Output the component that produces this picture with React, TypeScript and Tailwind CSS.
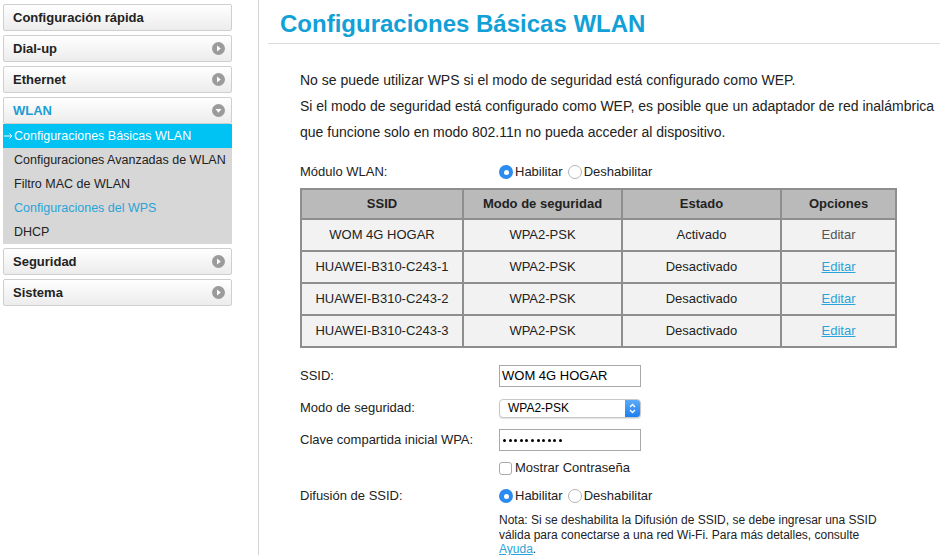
import React from 'react';

const font = { fontFamily: '"Liberation Sans", Arial, sans-serif' };

const Arrow: React.FC<{ down?: boolean }> = ({ down }) => (
  <svg width="13" height="13" viewBox="0 0 13 13" className="shrink-0">
    <circle cx="6.5" cy="6.5" r="6.5" fill="#9b9b9b" />
    {down ? <path d="M3.5 5 L9.5 5 L6.5 8.8 Z" fill="#fff" /> : <path d="M5 3.5 L8.8 6.5 L5 9.5 Z" fill="#fff" />}
  </svg>
);

const MenuItem: React.FC<{ label: string; arrow?: boolean; down?: boolean; active?: boolean }> = ({ label, arrow = true, down, active }) => (
  <div className="h-[27px] flex items-center justify-between pl-[9px] pr-[6px] border border-[#cfcfcf] rounded-[2px] bg-gradient-to-b from-white to-[#ececec]">
    <span className={`text-[13px] font-bold ${active ? 'text-[#1c9ed4]' : 'text-[#222]'}`}>{label}</span>
    {arrow && <Arrow down={down} />}
  </div>
);

const Radio: React.FC<{ checked?: boolean; label: string }> = ({ checked, label }) => (
  <label className="flex items-center gap-[2px] text-[13px] text-[#222]">
    {checked ? (
      <span className="w-[14px] h-[14px] rounded-full bg-[#2b8cf0] flex items-center justify-center">
        <span className="w-[5px] h-[5px] rounded-full bg-white" />
      </span>
    ) : (
      <span className="w-[14px] h-[14px] rounded-full border border-[#b5b5b5] bg-white" />
    )}
    <span>{label}</span>
  </label>
);

const rows = [
  { ssid: 'WOM 4G HOGAR', modo: 'WPA2-PSK', estado: 'Activado', link: false },
  { ssid: 'HUAWEI-B310-C243-1', modo: 'WPA2-PSK', estado: 'Desactivado', link: true },
  { ssid: 'HUAWEI-B310-C243-2', modo: 'WPA2-PSK', estado: 'Desactivado', link: true },
  { ssid: 'HUAWEI-B310-C243-3', modo: 'WPA2-PSK', estado: 'Desactivado', link: true },
];

const subItems = [
  { label: 'Configuraciones Avanzadas de WLAN', color: 'text-[#222]' },
  { label: 'Filtro MAC de WLAN', color: 'text-[#222]' },
  { label: 'Configuraciones del WPS', color: 'text-[#2aa4d8]' },
  { label: 'DHCP', color: 'text-[#222]' },
];

export default function App() {
  return (
    <div className="w-[940px] h-[555px] bg-white flex overflow-hidden" style={font}>
      {/* Sidebar */}
      <aside className="w-[259px] shrink-0 border-r border-[#d4d4d4] pt-[4px] pl-[3px]">
        <div className="w-[229px] flex flex-col gap-[4px]">
          <MenuItem label="Configuración rápida" arrow={false} />
          <MenuItem label="Dial-up" />
          <MenuItem label="Ethernet" />
          <div>
            <MenuItem label="WLAN" down active />
            <div className="bg-[#d7d7d7]">
              <div className="h-[24px] bg-[#00c2f3] text-white text-[12.5px] flex items-center whitespace-nowrap">
                <svg width="11" height="8" viewBox="0 0 11 8" className="shrink-0">
                  <path d="M1 4 H9 M6.5 1.5 L9 4 L6.5 6.5" stroke="#fff" strokeWidth="1" fill="none" />
                </svg>
                Configuraciones Básicas WLAN
              </div>
              {subItems.map((s) => (
                <div key={s.label} className={`h-[24px] flex items-center pl-[11px] text-[12.5px] whitespace-nowrap ${s.color}`}>
                  {s.label}
                </div>
              ))}
            </div>
          </div>
          <MenuItem label="Seguridad" />
          <MenuItem label="Sistema" />
        </div>
      </aside>

      {/* Main */}
      <main className="flex-1 pl-[9px] pt-[9px]">
        <h1 className="text-[24px] font-bold text-[#12a0d7] pl-[12px] pb-[4px] border-b border-[#dcdcdc] leading-[30px]">
          Configuraciones Básicas WLAN
        </h1>

        <div className="pl-[32px] pt-[23px] text-[14px] text-[#222] leading-[26px]">
          <p>No se puede utilizar WPS si el modo de seguridad está configurado como WEP.</p>
          <p>Si el modo de seguridad está configurado como WEP, es posible que un adaptador de red inalámbrica</p>
          <p>que funcione solo en modo 802.11n no pueda acceder al dispositivo.</p>

          <div className="flex items-center mt-[18px] h-[18px] text-[13px]">
            <span className="w-[199px]">Módulo WLAN:</span>
            <div className="flex items-center gap-[5px]">
              <Radio checked label="Habilitar" />
              <Radio label="Deshabilitar" />
            </div>
          </div>

          <table className="mt-[7px] w-[597px] border-collapse border-2 border-[#8e8e8e] text-[13px] leading-[16px] text-center">
            <thead>
              <tr className="bg-[#bababa] h-[30px]">
                <th className="w-[162px] border-2 border-[#8e8e8e] font-bold">SSID</th>
                <th className="w-[159px] border-2 border-[#8e8e8e] font-bold">Modo de seguridad</th>
                <th className="w-[159px] border-2 border-[#8e8e8e] font-bold">Estado</th>
                <th className="border-2 border-[#8e8e8e] font-bold">Opciones</th>
              </tr>
            </thead>
            <tbody>
              {rows.map((r) => (
                <tr key={r.ssid} className="bg-[#f2f2f2] h-[32px]">
                  <td className="border-2 border-[#8e8e8e]">{r.ssid}</td>
                  <td className="border-2 border-[#8e8e8e]">{r.modo}</td>
                  <td className="border-2 border-[#8e8e8e]">{r.estado}</td>
                  <td className="border-2 border-[#8e8e8e]">
                    {r.link ? <span className="text-[#2aa4d8] underline">Editar</span> : <span className="text-[#555]">Editar</span>}
                  </td>
                </tr>
              ))}
            </tbody>
          </table>

          <div className="text-[13px] leading-[16px] mt-[17px] flex flex-col">
            <div className="flex items-center h-[22px]">
              <span className="w-[199px]">SSID:</span>
              <div className="w-[142px] h-[22px] border border-[#a9a9a9] px-[2px] flex items-center text-[13px] text-black">WOM 4G HOGAR</div>
            </div>
            <div className="flex items-center h-[20px] mt-[11px]">
              <span className="w-[199px]">Modo de seguridad:</span>
              <div className="w-[142px] h-[19px] rounded-[4px] border border-[#c8c8c8] shadow-[0_1px_1px_rgba(0,0,0,0.12)] flex items-center justify-between pl-[8px] bg-white overflow-hidden">
                <span className="text-[12px] text-black">WPA2-PSK</span>
                <span className="w-[15px] h-full bg-gradient-to-b from-[#5aaaf7] to-[#1a7ff0] flex items-center justify-center">
                  <svg width="7" height="11" viewBox="0 0 7 11">
                    <path d="M1 4 L3.5 1.5 L6 4 M1 7 L3.5 9.5 L6 7" stroke="#fff" strokeWidth="1.3" fill="none" />
                  </svg>
                </span>
              </div>
            </div>
            <div className="flex items-center h-[22px] mt-[11px]">
              <span className="w-[199px]">Clave compartida inicial WPA:</span>
              <div className="w-[142px] h-[22px] border border-[#a9a9a9] px-[3px] flex items-center gap-[2.6px]">
                {Array.from({ length: 11 }).map((_, i) => (
                  <span key={i} className="w-[3px] h-[3px] rounded-full bg-black" />
                ))}
              </div>
            </div>
            <div className="flex items-center h-[16px] mt-[9px] pl-[199px]">
              <span className="w-[13px] h-[13px] border border-[#a9a9a9] rounded-[3px] bg-white mr-[3px]" />
              <span>Mostrar Contraseña</span>
            </div>
            <div className="flex items-center h-[18px] mt-[11px]">
              <span className="w-[199px]">Difusión de SSID:</span>
              <div className="flex items-center gap-[5px]">
                <Radio checked label="Habilitar" />
                <Radio label="Deshabilitar" />
              </div>
            </div>
            <div className="pl-[199px] mt-[8px] text-[12px] leading-[14.5px] w-[590px]">
              Nota: Si se deshabilita la Difusión de SSID, se debe ingresar una SSID válida para conectarse a una red Wi-Fi. Para más detalles, consulte{' '}
              <span className="text-[#2aa4d8] underline">Ayuda</span>.
            </div>
          </div>
        </div>
      </main>
    </div>
  );
}
